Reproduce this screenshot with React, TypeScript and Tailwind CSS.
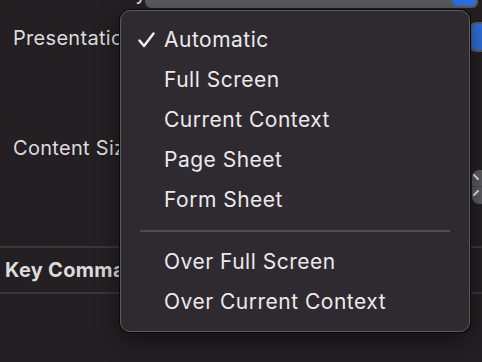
import React from "react";

const items = ["Automatic", "Full Screen", "Current Context", "Page Sheet", "Form Sheet"];
const items2 = ["Over Full Screen", "Over Current Context"];

function Check() {
  return (
    <svg width="17" height="16" viewBox="0 0 17 16" fill="none">
      <path d="M1.5 8.5 L6 14 L15.5 1.5" stroke="#f2f0f2" strokeWidth="2.4" strokeLinecap="round" strokeLinejoin="round" />
    </svg>
  );
}

function Item({ label, checked }: { label: string; checked?: boolean }) {
  return (
    <div className="flex h-[40px] items-center">
      <div className="flex w-[43px] justify-end pr-[9px]">{checked ? <Check /> : null}</div>
      <span>{label}</span>
    </div>
  );
}

export default function App() {
  return (
    <div
      className="relative h-[362px] w-[482px] overflow-hidden bg-[#231f22] text-[#dedcde]"
      style={{ fontFamily: "Inter, 'Noto Sans', sans-serif" }}
    >
      {/* top partially visible row */}
      <div className="flex h-[10px] items-start">
        <div className="-mt-[19px] w-[145px] whitespace-nowrap pl-[13px] text-[20px] leading-[24px] tracking-[0.3px]">Transition Style</div>
        <div className="-mt-[16px] flex h-[24px] w-[333px] overflow-hidden rounded-[6px] bg-[#5b5a5d]">
          <div className="flex-1" />
          <div className="my-[2px] mr-[2px] w-[24px] rounded-[5px] bg-[#2e6fdc]" />
        </div>
      </div>
      {/* Presentation row */}
      <div className="flex h-[60px] items-start justify-between">
        <div className="whitespace-nowrap pl-[13px] pt-[16px] text-[20px] leading-[24px] tracking-[0.3px]">Presentation Style</div>
        <div className="mr-[-10px] mt-[12px] flex h-[30px] w-[22px] rounded-[6px] bg-[#5b5a5d] p-[2px]">
          <div className="flex-1 rounded-[5px] bg-[#2e6fdc]" />
        </div>
      </div>
      {/* spacer */}
      <div className="h-[66px]" />
      {/* Content size row */}
      <div className="flex h-[110px] items-start justify-between">
        <div className="whitespace-nowrap pl-[13px] text-[20px] leading-[24px] tracking-[0.3px]">Content Size</div>
        <div className="mr-[-12px] mt-[34px] flex h-[34px] w-[22px] flex-col items-center justify-center rounded-[7px] bg-[#5b5a5d]">
          <svg width="22" height="30" viewBox="0 0 22 30" fill="none">
            <path d="M2 3 L6 7" stroke="#e6e6e6" strokeWidth="2" strokeLinecap="round" />
            <path d="M0 14.5 L22 14.5" stroke="#4a494c" strokeWidth="1" />
            <path d="M2 23 L6 19" stroke="#e6e6e6" strokeWidth="2" strokeLinecap="round" />
          </svg>
        </div>
      </div>
      <div className="h-[2px] bg-[#3a373a]" />
      <div className="flex h-[44px] items-center whitespace-nowrap pl-[5px] text-[20px] font-bold tracking-[0.3px] text-[#dcdadc]">Key Commands</div>
      <div className="h-[2px] bg-[#3a373a]" />

      {/* popup menu */}
      <div className="absolute left-[120px] top-[10px] w-[350px] rounded-[10px] shadow-[0_0_0_1px_#0a0a0a,0_8px_24px_rgba(0,0,0,0.5)]">
        <div className="rounded-[10px] border-[1.5px] border-[#5c5a5e] bg-[#2f2a30] py-[9px] text-[21px] tracking-[0.5px] text-[#ebe9eb]">
          {items.map((l, i) => (
            <Item key={l} label={l} checked={i === 0} />
          ))}
          <div className="flex h-[22px] items-center px-[19px]">
            <div className="h-[2px] flex-1 bg-[#4f4a50]" />
          </div>
          {items2.map((l) => (
            <Item key={l} label={l} />
          ))}
        </div>
      </div>
    </div>
  );
}
